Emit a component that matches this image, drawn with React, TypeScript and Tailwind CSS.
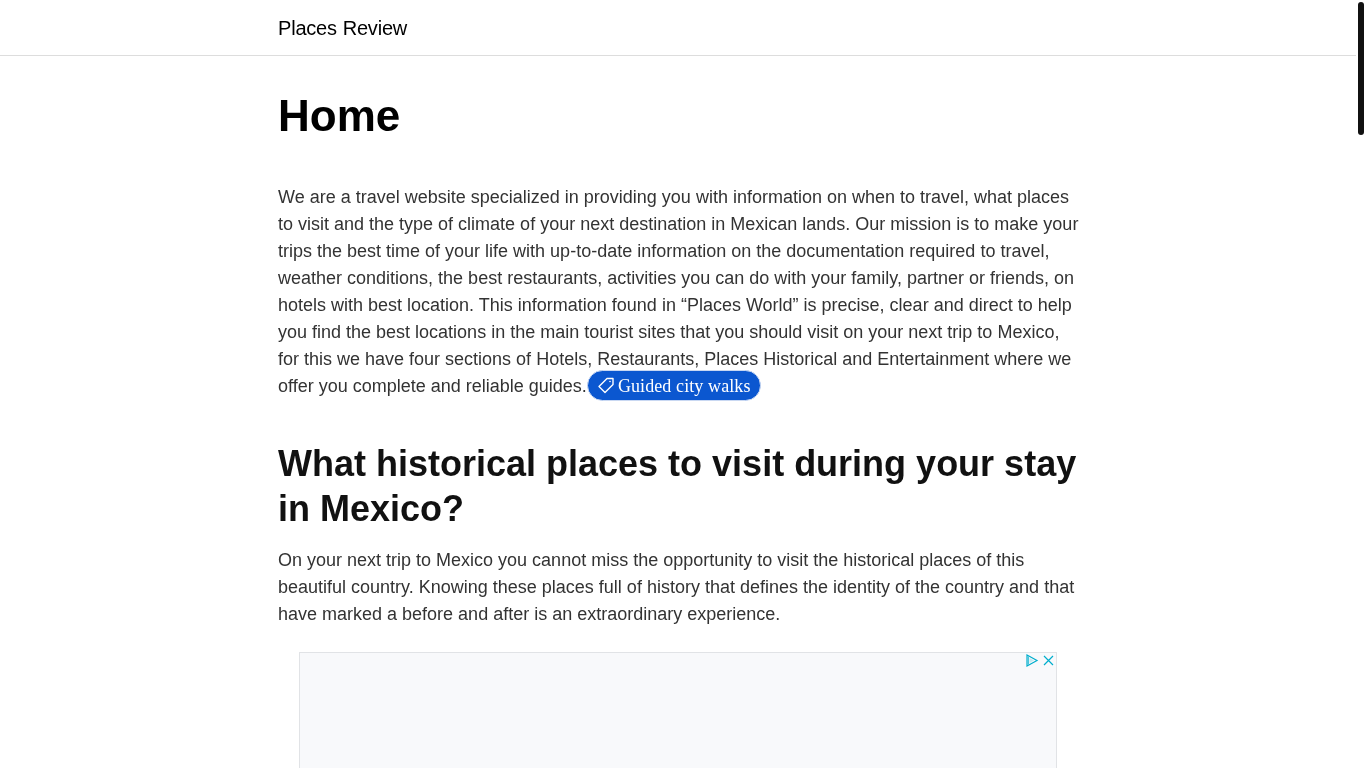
export default function App() {
  return (
    <div className="h-screen overflow-hidden bg-white">
      <div className="flex will-change-transform font-['Liberation_Sans',Arial,sans-serif]">
        <div className="w-[1356px] shrink-0">
          {/* ===== HEADER ===== */}
          <header className="h-[56px] border-b border-[#dddddd]">
            <div className="w-[800px] mx-auto">
              <a href="#" className="block text-[20px] leading-[56px] text-black tracking-[-0.2px] [word-spacing:0.5px]">
                Places Review
              </a>
            </div>
          </header>

          <main className="w-[800px] mx-auto">
            <h1 className="mt-[32px] text-[44px] leading-[56px] font-bold text-black">Home</h1>

            <p className="mt-[40px] -mr-[3px] text-[18px] leading-[27px] text-[#333333]">
              We are a travel website specialized in providing you with information on when to travel, what places
              to visit and the type of climate of your next destination in Mexican lands. Our mission is to make your
              trips the best time of your life with up-to-date information on the documentation required to travel,
              weather conditions, the best restaurants, activities you can do with your family, partner or friends, on
              hotels with best location. This information found in “Places World” is precise, clear and direct to help
              you find the best locations in the main tourist sites that you should visit on your next trip to Mexico,
              for this we have four sections of Hotels, Restaurants, Places Historical and Entertainment where we
              offer you complete and reliable guides.
              <a
                href="#"
                className="inline-flex items-center align-middle h-[31px] -my-[2px] -translate-y-[2px] pl-[9px] pr-[9px] rounded-full bg-[#0b57d0] border border-[#c9d8f2] text-white font-['Liberation_Serif',serif] text-[18px] tracking-[0.1px] leading-[29px]"
              >
                <svg width="18" height="18" viewBox="0 0 18 18" fill="none" stroke="white" strokeWidth="1.4" strokeLinejoin="round" className="mr-[3px]">
                  <path d="M10 2.5 H16 V8.5 L8 16.5 L2 10.5 Z" />
                  <circle cx="13" cy="5.5" r="0.8" fill="white" stroke="none" />
                </svg>
                <span className="translate-y-[1px]">Guided city walks</span>
              </a>
            </p>

            <h2 className="mt-[40px] text-[36px] leading-[45px] font-bold text-[#111111]">
              What historical places to visit during your stay in Mexico?
            </h2>

            <p className="mt-[16px] text-[18px] leading-[27px] text-[#333333]">
              On your next trip to Mexico you cannot miss the opportunity to visit the historical places of this
              beautiful country. Knowing these places full of history that defines the identity of the country and that
              have marked a before and after is an extraordinary experience.
            </p>

            {/* Ad slot */}
            <div className="relative mt-[24px] mx-auto w-[758px] h-[280px] bg-[#f8f9fb] border border-[#e1e3e6]">
              <div className="absolute -top-[1px] right-0 flex items-center gap-[2px] pt-[1px]">
                <svg width="15" height="15" viewBox="0 0 15 15" fill="none" stroke="#00aecd" strokeWidth="1.2">
                  <path d="M3 2 V13 L13 7.5 Z" />
                  <path d="M4.4 3.5 V11.5" strokeWidth="1.2" opacity="0.7" />
                  <path d="M5.5 5 V10 L10 7.5 Z" fill="#00aecd" fillOpacity="0.2" stroke="none" />
                </svg>
                <svg width="15" height="15" viewBox="0 0 15 15" fill="none" stroke="#00aecd" strokeWidth="1.2">
                  <path d="M3 3 L12 12 M12 3 L3 12" />
                </svg>
              </div>
            </div>
          </main>
        </div>

        {/* custom scrollbar */}
        <aside className="w-[10px] shrink-0 pt-[2px] pl-[2px]">
          <div className="w-[6px] h-[133px] rounded-[3px] bg-[#111111]" />
        </aside>
      </div>
    </div>
  );
}
